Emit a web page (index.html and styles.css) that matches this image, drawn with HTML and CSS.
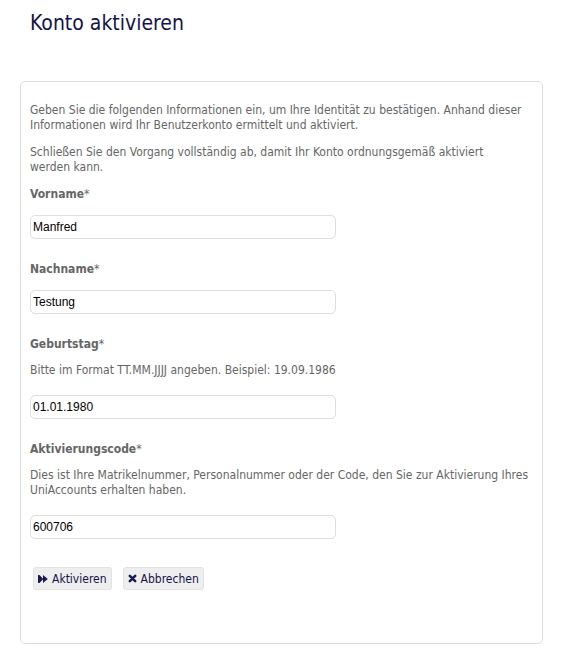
FILE: index.html
```html
<!DOCTYPE html>
<html lang="de">
<head>
    <meta charset="UTF-8">
    <meta name="viewport" content="width=device-width, initial-scale=1.0">
    <title>Konto aktivieren</title>
    <link rel="stylesheet" href="styles.css">
</head>
<body>
    <h1>Konto aktivieren</h1>

    <form class="card">
        <p>Geben Sie die folgenden Informationen ein, um Ihre Identität zu bestätigen. Anhand dieser Informationen wird Ihr Benutzerkonto ermittelt und aktiviert.</p>
        <p>Schließen Sie den Vorgang vollständig ab, damit Ihr Konto ordnungsgemäß aktiviert<br>werden kann.</p>

        <div class="field">
            <label for="vorname">Vorname<span class="req">*</span></label>
            <input type="text" id="vorname" value="Manfred">
        </div>

        <div class="field">
            <label for="nachname">Nachname<span class="req">*</span></label>
            <input type="text" id="nachname" value="Testung">
        </div>

        <div class="field">
            <label for="geburtstag" class="with-hint">Geburtstag<span class="req">*</span></label>
            <div class="hint">Bitte im Format TT.MM.JJJJ angeben. Beispiel: 19.09.1986</div>
            <input type="text" id="geburtstag" value="01.01.1980">
        </div>

        <div class="field">
            <label for="code" class="with-hint">Aktivierungscode<span class="req">*</span></label>
            <div class="hint">Dies ist Ihre Matrikelnummer, Personalnummer oder der Code, den Sie zur Aktivierung Ihres UniAccounts erhalten haben.</div>
            <input type="text" id="code" value="600706">
        </div>

        <div class="actions">
            <button type="submit" class="btn">
                <svg class="icon" viewBox="0 0 10 10" width="10" height="10"><path d="M0 1h1.4v8H0z M1.4 1l4 4-4 4z M5 1l4.8 4L5 9z" fill="#1a1a4e"/></svg>
                Aktivieren
            </button>
            <button type="button" class="btn">
                <svg class="icon" viewBox="0 0 10 10" width="9" height="9"><path d="M2 2l6 6M8 2l-6 6" stroke="#1a1a4e" stroke-width="2.8" stroke-linecap="round"/></svg>
                Abbrechen
            </button>
        </div>
    </form>
</body>
</html>
```

FILE: styles.css
```css
body {
    font-family: "DejaVu Sans Condensed", "DejaVu Sans", sans-serif;
    font-size: 12px;
    line-height: 15px;
    color: #666;
    margin: 0;
    padding: 0 25px 0 20px;
    background: #fff;
}
h1 {
    font-size: 21px;
    font-weight: normal;
    color: #14144a;
    line-height: 26px;
    margin: 10px 0 45px 10px;
}
.card {
    display: block;
    border: 1px solid #dcdcdc;
    border-radius: 5px;
    padding: 21px 8px 53px 9px;
}
p {
    margin: 0 0 12px;
}
label {
    display: block;
    font-weight: bold;
    color: #666;
    margin-bottom: 13px;
}
label.with-hint {
    margin-bottom: 11px;
}
.req {
    font-weight: normal;
}
.hint {
    margin-bottom: 17px;
}
.field {
    margin-bottom: 23px;
}
input {
    display: block;
    box-sizing: border-box;
    width: 306px;
    height: 24px;
    padding: 0 2px;
    border: 1px solid #dedede;
    border-radius: 5px;
    font-family: "Liberation Sans", Arial, sans-serif;
    font-size: 12px;
    color: #000;
    outline: none;
}
.actions {
    display: flex;
    gap: 11px;
    padding-left: 3px;
    margin-top: 28px;
}
.btn {
    display: inline-flex;
    align-items: center;
    gap: 4px;
    height: 23px;
    padding: 0 4px;
    background: #eee;
    border: 1px solid #e2e2e2;
    border-radius: 3px;
    font-family: inherit;
    font-size: 12px;
    color: #14144a;
    cursor: pointer;
}
```
